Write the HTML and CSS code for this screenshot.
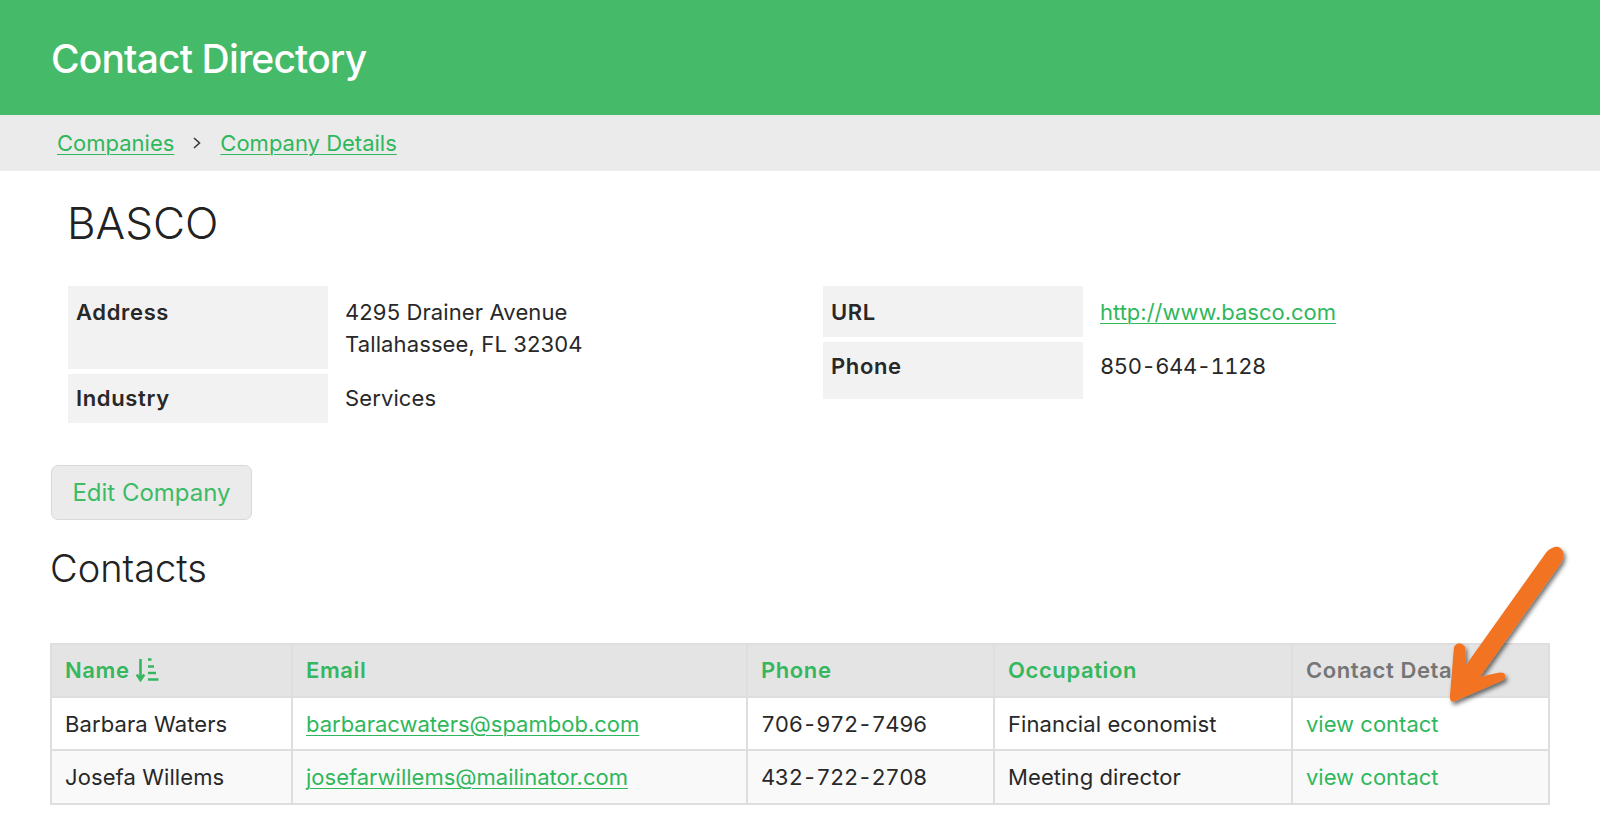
FILE: index.html
```html
<!DOCTYPE html>
<html lang="en">
<head>
<meta charset="utf-8">
<title>Contact Directory</title>
<link rel="stylesheet" href="styles.css">
</head>
<body>
<header class="topbar"><h1 class="brand">Contact Directory</h1></header>
<nav class="crumbs">
  <a href="#">Companies</a>
  <svg class="crumb-sep" width="10" height="14" viewBox="0 0 10 14"><path d="M2 2l5.5 5L2 12" fill="none" stroke="#3a3a3a" stroke-width="1.6"/></svg>
  <a href="#">Company Details</a>
</nav>
<main class="content">
  <h2 class="company">BASCO</h2>
  <section class="details">
    <dl class="facts">
      <dt class="tall">Address</dt>
      <dd>4295 Drainer Avenue<br>Tallahassee, FL 32304</dd>
      <dt class="second">Industry</dt>
      <dd class="second">Services</dd>
    </dl>
    <dl class="facts">
      <dt>URL</dt>
      <dd><a href="#">http://www.basco.com</a></dd>
      <dt class="second phone">Phone</dt>
      <dd class="second num">850-644-1128</dd>
    </dl>
  </section>
  <button class="btn" type="button">Edit Company</button>
  <h3 class="section-title">Contacts</h3>
  <table class="contacts">
    <colgroup><col class="c1"><col class="c2"><col class="c3"><col class="c4"><col class="c5"></colgroup>
    <thead>
      <tr>
        <th class="sortable">Name <svg class="sort" width="23" height="24" viewBox="0 0 23 24"><path d="M4.500 1v20M.8 16.500l3.700 5.500 3.700-5.500" fill="none" stroke="currentColor" stroke-width="2.600"/><path d="M12 1.500h3.500M12 8.500h6M12 15h8M12 21.500h10.500" fill="none" stroke="currentColor" stroke-width="2.600"/></svg></th>
        <th class="sortable">Email</th>
        <th class="sortable">Phone</th>
        <th class="sortable">Occupation</th>
        <th>Contact Details</th>
      </tr>
    </thead>
    <tbody>
      <tr>
        <td>Barbara Waters</td>
        <td><a href="#">barbaracwaters@spambob.com</a></td>
        <td class="num">706-972-7496</td>
        <td>Financial economist</td>
        <td><a class="plain" href="#">view contact</a></td>
      </tr>
      <tr>
        <td>Josefa Willems</td>
        <td><a href="#">josefarwillems@mailinator.com</a></td>
        <td class="num">432-722-2708</td>
        <td>Meeting director</td>
        <td><a class="plain" href="#">view contact</a></td>
      </tr>
    </tbody>
  </table>
</main>
<svg class="arrow" width="1600" height="826" viewBox="0 0 1600 826">
  <defs><filter id="ds" x="-20%" y="-20%" width="140%" height="140%"><feDropShadow dx="2" dy="3" stdDeviation="2" flood-color="#000" flood-opacity=".55"/></filter></defs>
  <path d="M1466 665L1546.700 551.700Q1558.300 541.700 1563.300 552Q1564.500 557 1561 563L1480 676.700L1498.300 672.700Q1505 672 1505.500 676Q1505.500 679 1501.700 680.700L1453.500 701.700Q1449.500 702 1450 695L1454 646.700Q1459.300 640 1465 646.700Z" fill="#f27322" filter="url(#ds)"/>
</svg>
</body>
</html>
```
FILE: styles.css
```css
* { box-sizing: border-box; }
html, body { margin: 0; padding: 0; background: #fff; }
body {
  font-family: Inter, "Liberation Sans", sans-serif;
  font-size: 22px;
  line-height: 32px;
  color: #282828;
  position: relative;
  height: 826px;
  overflow: hidden;
}
a { color: #2fb75c; text-decoration: underline; text-underline-offset: 3px; text-decoration-thickness: 1px; letter-spacing: 0; }
a.plain { text-decoration: none; }

.topbar { height: 115px; background: #45ba69; display: flex; align-items: center; padding: 2px 0 0 51px; }
.brand { margin: 0; font-size: 39px; font-weight: 450; letter-spacing: -.85px; color: #fff; line-height: 1; }

.crumbs { height: 56px; background: #ebebeb; display: flex; align-items: center; padding-left: 57px; gap: 18px; }
.crumb-sep { flex: none; }

.content { padding: 0 51px; }
.company { margin: 0; padding: 24px 0 0 16px; font-size: 44px; line-height: 56px; font-weight: 300; color: #222; }
.details { display: grid; grid-template-columns: 755px 1fr; margin: 35px 0 0 17px; }
.facts { margin: 0; display: grid; grid-template-columns: 260px 1fr; column-gap: 17px; row-gap: 5px; align-items: start; align-content: start; }
.facts dt { background: #f2f2f2; font-weight: 600; letter-spacing: .65px; padding: 10px 8px 0; height: 51px; align-self: stretch; }
.facts dt.tall { height: 83px; }
.facts dt.second { padding-top: 8px; height: 49px; }
.facts dt.phone { height: 57px; }
.facts dd { margin: 0; padding: 10px 0 0; letter-spacing: .12px; }
.facts dd.second { padding-top: 8px; }
.facts dd.num, .contacts td.num { font-variant-numeric: tabular-nums; letter-spacing: -.45px; }

.btn {
  display: block; margin: 42px 0 0; width: 201px; height: 55px;
  background: #ebebeb; border: 1px solid #d8d8d8; border-radius: 7px;
  font: inherit; font-size: 24px; color: #3dbb66; padding: 0;
}
.section-title { margin: 24px 0 0 -1px; font-size: 38px; line-height: 48px; font-weight: 300; color: #222; }

.contacts { border-collapse: collapse; table-layout: fixed; width: 1498px; margin: 51px 0 0 -1px; border: 2px solid #dedede; }
.c1 { width: 241px; } .c2 { width: 455px; } .c3 { width: 247px; } .c4 { width: 298px; } .c5 { width: 257px; }
.contacts th, .contacts td { border: 2px solid #dedede; padding: 0 13px; text-align: left; height: 53px; white-space: nowrap; overflow: hidden; letter-spacing: .1px; }
.contacts th { background: #e4e4e4; color: #757575; font-weight: 600; letter-spacing: .6px; height: 53px; padding-bottom: 1px; }
.contacts th.sortable { color: #34b75e; }
.contacts tbody tr:last-child td { height: 54px; }
.contacts tbody tr:nth-child(even) td { background: #f9f9f9; }
.sort { vertical-align: -4px; }
.arrow { position: absolute; left: 0; top: 0; pointer-events: none; }
```
